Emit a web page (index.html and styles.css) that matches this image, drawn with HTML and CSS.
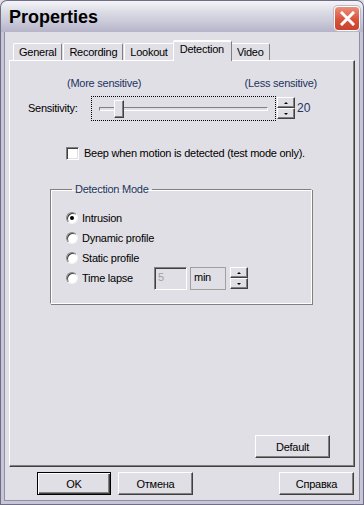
FILE: index.html
```html
<!DOCTYPE html>
<html lang="en">
<head>
    <meta charset="UTF-8">
    <title>Properties</title>
    <link rel="stylesheet" href="styles.css">
</head>
<body>
    <div class="window">
        <div class="titlebar">
            <span class="title">Properties</span>
            <button class="close" aria-label="Close">
                <svg width="15" height="15" viewBox="0 0 15 15">
                    <path d="M2 2 L13 13 M13 2 L2 13" stroke="#fff" stroke-width="3" stroke-linecap="square"/>
                </svg>
            </button>
        </div>
        <div class="frame">
            <div class="tabs">
                <div class="tab">General</div>
                <div class="tab">Recording</div>
                <div class="tab">Lookout</div>
                <div class="tab active">Detection</div>
                <div class="tab">Video</div>
            </div>
            <div class="panel">
                <div class="hints">
                    <span>(More sensitive)</span>
                    <span>(Less sensitive)</span>
                </div>
                <div class="sens-row">
                    <span class="sens-label">Sensitivity:</span>
                    <div class="slider">
                        <div class="track"></div>
                        <div class="thumb"></div>
                    </div>
                    <div class="spin">
                        <span class="spin-btn"><i class="up"></i></span>
                        <span class="spin-btn"><i class="down"></i></span>
                    </div>
                    <span class="value">20</span>
                </div>
                <label class="check-row">
                    <span class="checkbox"></span>
                    Beep when motion is detected (test mode only).
                </label>
                <fieldset class="group">
                    <legend>Detection Mode</legend>
                    <div class="radio-row"><span class="radio checked"></span>Intrusion</div>
                    <div class="radio-row"><span class="radio"></span>Dynamic profile</div>
                    <div class="radio-row"><span class="radio"></span>Static profile</div>
                    <div class="radio-row lapse">
                        <span class="radio"></span>
                        <span class="lapse-label">Time lapse</span>
                        <span class="edit disabled">5</span>
                        <span class="edit unit">min</span>
                        <div class="spin small">
                            <span class="spin-btn"><i class="up"></i></span>
                            <span class="spin-btn"><i class="down"></i></span>
                        </div>
                    </div>
                </fieldset>
                <div class="panel-foot">
                    <button class="btn">Default</button>
                </div>
            </div>
            <div class="buttons">
                <button class="btn default">OK</button>
                <button class="btn">Отмена</button>
                <button class="btn right">Справка</button>
            </div>
        </div>
    </div>
</body>
</html>
```

FILE: styles.css
```css
body {
    margin: 0;
    background: #e0dfe5;
    font-family: "Liberation Sans", Arial, sans-serif;
    font-size: 11px;
    letter-spacing: -0.25px;
    color: #000;
}
.window {
    width: 364px;
    height: 505px;
    box-sizing: border-box;
    display: flex;
    flex-direction: column;
    background: #e0dfe5;
}
.titlebar {
    height: 32px;
    flex: none;
    display: flex;
    align-items: center;
    justify-content: space-between;
    padding: 0 3px 0 8px;
    border-radius: 7px 7px 0 0;
    border: 1px solid #6e6e87;
    border-bottom: none;
    box-sizing: border-box;
    background: linear-gradient(#f4f4f8 0%, #dcdce6 35%, #c9c8d8 70%, #b5b4c9 100%);
}
.title {
    font-weight: bold;
    font-size: 18px;
    letter-spacing: 0;
    margin-top: 2px;
}
.close {
    width: 26px;
    height: 25px;
    margin-top: 3px;
    padding: 0;
    border: 1px solid #fff;
    border-radius: 4px;
    background: linear-gradient(#e9907c, #d9523a 55%, #c7432d);
    display: flex;
    align-items: center;
    justify-content: center;
    box-shadow: 0 0 0 1px #b9b8cc;
}
.frame {
    flex: 1;
    display: flex;
    flex-direction: column;
    border: 1px solid #6e6e87;
    border-top: none;
    box-shadow: inset 3px 0 #c7c6d7, inset -3px 0 #c7c6d7, inset 0 -3px #c7c6d7, inset 4px 0 #8e8ea5, inset -4px 0 #8e8ea5, inset 0 -4px #8e8ea5;
    padding: 8px 8px 0 8px;
}
.tabs {
    display: flex;
    height: 20px;
    padding-left: 4px;
    align-items: flex-end;
}
.tab {
    height: 17px;
    padding: 0 5px;
    border: 1px solid #fff;
    border-right-color: #808080;
    border-bottom: none;
    border-radius: 2px 2px 0 0;
    display: flex;
    align-items: center;
    box-sizing: border-box;
    margin-right: 1px;
    position: relative;
}
.tab.active {
    height: 21px;
    padding: 1px 7px 0 6px;
    margin: 0 -1px 0 -2px;
    border-top: 2px solid #fff;
    background: #e0dfe5;
    z-index: 1;
    top: 1px;
    align-items: flex-start;
}
.panel {
    height: 407px;
    box-sizing: border-box;
    border: 1px solid #fff;
    border-right-color: #404040;
    border-bottom-color: #404040;
    box-shadow: inset -1px -1px 0 #808080;
    display: flex;
    flex-direction: column;
}
.hints {
    display: flex;
    justify-content: space-between;
    padding: 16px 37px 0 57px;
    color: #22345e;
    line-height: 13px;
}
.sens-row {
    display: flex;
    align-items: center;
    margin-top: 5px;
    height: 26px;
}
.sens-label {
    width: 63px;
    padding-left: 18px;
}
.slider {
    width: 183px;
    height: 23px;
    border: 1px dotted #000;
    position: relative;
}
.track {
    position: absolute;
    left: 7px;
    right: 7px;
    top: 10px;
    height: 4px;
    box-sizing: border-box;
    border-top: 1px solid #808080;
    border-left: 1px solid #808080;
    border-bottom: 1px solid #fff;
    border-right: 1px solid #fff;
}
.thumb {
    position: absolute;
    left: 22px;
    top: 3px;
    width: 10px;
    height: 18px;
    box-sizing: border-box;
    background: #e0dfe5;
    border: 1px solid #fff;
    border-right-color: #404040;
    border-bottom-color: #404040;
    box-shadow: inset -1px -1px 0 #808080;
}
.spin {
    display: flex;
    flex-direction: column;
    margin-left: 1px;
    width: 18px;
}
.spin-btn {
    height: 11px;
    box-sizing: border-box;
    border: 1px solid #fff;
    border-right-color: #404040;
    border-bottom-color: #404040;
    box-shadow: inset -1px -1px 0 #808080;
    display: flex;
    align-items: center;
    justify-content: center;
    background: #e0dfe5;
}
.spin-btn i {
    width: 0;
    height: 0;
    border-left: 2px solid transparent;
    border-right: 2px solid transparent;
}
.spin-btn i.up {
    border-bottom: 2px solid #000;
}
.spin-btn i.down {
    border-top: 2px solid #000;
}
.value {
    margin-left: 2px;
    font-size: 12px;
    letter-spacing: 0;
    color: #22345e;
}
.check-row {
    display: flex;
    align-items: center;
    margin: 25px 0 0 56px;
    height: 14px;
}
.checkbox {
    width: 13px;
    height: 13px;
    box-sizing: border-box;
    background: #fff;
    border: 1px solid #808080;
    border-right-color: #fff;
    border-bottom-color: #fff;
    box-shadow: inset 1px 1px 0 #404040, inset -1px -1px 0 #e0dfe5;
    margin-right: 5px;
}
.group {
    margin: 23px 0 0 40px;
    width: 262px;
    height: 121px;
    box-sizing: border-box;
    border: 1px solid #808080;
    border-right-color: #fff;
    border-bottom-color: #fff;
    box-shadow: 1px 1px 0 #808080, inset 1px 1px 0 #fff;
    padding: 13px 0 0 15px;
    color: #000;
}
.group legend {
    padding: 0 3px;
    margin-left: 6px;
    color: #22345e;
}
.radio-row {
    display: flex;
    align-items: center;
    height: 20px;
}
.radio {
    width: 12px;
    height: 12px;
    box-sizing: border-box;
    border-radius: 50%;
    background: #fff;
    border: 1px solid #8a8a8a;
    border-right-color: #f4f4f4;
    border-bottom-color: #f4f4f4;
    box-shadow: inset 1px 1px 0 #404040;
    margin-right: 4px;
    position: relative;
}
.radio.checked::after {
    content: "";
    position: absolute;
    left: 3px;
    top: 3px;
    width: 4px;
    height: 4px;
    border-radius: 50%;
    background: #000;
}
.lapse-label {
    width: 72px;
}
.edit {
    width: 33px;
    height: 23px;
    box-sizing: border-box;
    border: 1px solid #808080;
    border-right-color: #fff;
    border-bottom-color: #fff;
    padding: 3px 0 0 3px;
    margin-right: 3px;
}
.edit.disabled {
    color: #a0a0a0;
    box-shadow: inset 1px 1px 0 #404040;
}
.edit.unit {
    width: 36px;
    border-color: #a0a0a0;
}
.spin.small {
    margin-left: 1px;
}
.panel-foot {
    margin-top: auto;
    display: flex;
    justify-content: flex-end;
    padding: 0 24px 8px 0;
}
.btn {
    width: 75px;
    height: 23px;
    font-family: "Liberation Sans", Arial, sans-serif;
    font-size: 11px;
    letter-spacing: -0.25px;
    padding: 0;
    background: #e0dfe5;
    border: 1px solid #fff;
    border-right-color: #404040;
    border-bottom-color: #404040;
    box-shadow: inset -1px -1px 0 #808080;
    color: #000;
}
.buttons {
    display: flex;
    gap: 7px;
    padding: 5px 1px 0 28px;
}
.buttons .btn.default {
    width: 74px;
    border: 1px solid #000;
    box-shadow: inset 1px 1px 0 #fff, inset -1px -1px 0 #404040, inset -2px -2px 0 #808080;
}
.buttons .btn.right {
    margin-left: auto;
}
```
